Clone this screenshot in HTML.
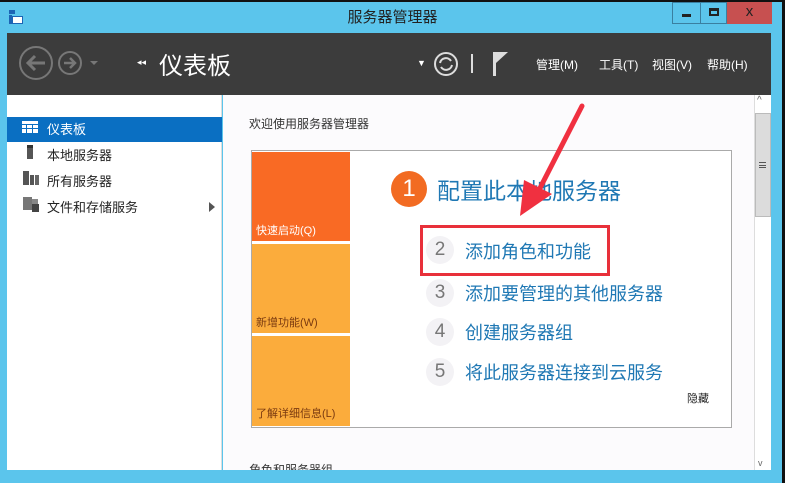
<!DOCTYPE html>
<html><head><meta charset="utf-8"><style>
*{margin:0;padding:0;box-sizing:border-box}
body{width:785px;height:483px;overflow:hidden;background:#5bc5ec;font-family:"Liberation Sans","Noto Sans CJK SC",sans-serif;position:relative}
.a{position:absolute}
.t{white-space:nowrap}
</style></head><body>
<div class="a" style="left:0;top:0;width:785px;height:2px;background:#111"></div>
<div class="a" style="right:0;top:0;width:3px;height:483px;background:#111"></div>
<div class="a" style="left:9px;top:10px;width:6px;height:4px;background:#1c64b4"></div>
<div class="a" style="left:9px;top:15px;width:3px;height:9px;background:#1c64b4"></div>
<div class="a" style="left:12px;top:16px;width:11px;height:8px;border:1px solid #1c64b4;background:#fff"></div>
<div class="a t" style="left:0;width:785px;top:6px;text-align:center;font-size:15px;color:#222">服务器管理器</div>
<div class="a" style="left:672px;top:2px;width:29px;height:22px;border:1px solid #3a7fa0;background:#5bc5ec"></div>
<div class="a" style="left:682px;top:14px;width:9px;height:3px;background:#222"></div>
<div class="a" style="left:700px;top:2px;width:27px;height:22px;border:1px solid #3a7fa0;background:#5bc5ec"></div>
<div class="a" style="left:709px;top:8px;width:10px;height:8px;border:2px solid #222;border-top-width:3px"></div>
<div class="a" style="left:727px;top:2px;width:45px;height:22px;background:#c75050;color:#222;font-size:15px;text-align:center;line-height:20px">x</div>
<div class="a" style="left:7px;top:33px;width:764px;height:62px;background:#3c3c3c"></div>
<svg class="a" style="left:18px;top:44px" width="85" height="40">
<circle cx="18" cy="19" r="16" fill="none" stroke="#777" stroke-width="2"/>
<path d="M27 19H10M17 12l-7 7 7 7" fill="none" stroke="#777" stroke-width="3"/>
<circle cx="52" cy="19" r="11" fill="none" stroke="#777" stroke-width="2"/>
<path d="M46 19h11M52 14l5 5-5 5" fill="none" stroke="#777" stroke-width="2.5"/>
<path d="M72 17h8l-4 4z" fill="#777"/>
</svg>
<div class="a t" style="left:137px;top:57px;color:#fff;font-size:9px">◂◂</div>
<div class="a t" style="left:159px;top:46px;color:#fff;font-size:24px">仪表板</div>
<div class="a t" style="left:417px;top:58px;color:#fff;font-size:9px">▼</div>
<svg class="a" style="left:432px;top:51px" width="80" height="28">
<circle cx="14" cy="13" r="11" fill="none" stroke="#ddd" stroke-width="2"/>
<path d="M8 12a6 6 0 0 1 11-2M20 14a6 6 0 0 1-11 2" fill="none" stroke="#ddd" stroke-width="2"/>
<rect x="39" y="3" width="2" height="19" fill="#ddd"/>
<rect x="61" y="1" width="3" height="24" fill="#ddd"/>
<path d="M64 1h12l-12 11z" fill="#ddd"/>
</svg>
<div class="a t" style="left:536px;top:56px;color:#fff;font-size:12px">管理(M)</div>
<div class="a t" style="left:599px;top:56px;color:#fff;font-size:12px">工具(T)</div>
<div class="a t" style="left:652px;top:56px;color:#fff;font-size:12px">视图(V)</div>
<div class="a t" style="left:707px;top:56px;color:#fff;font-size:12px">帮助(H)</div>
<div class="a" style="left:7px;top:95px;width:215px;height:375px;background:#fff;border-right:1px solid #ddd"></div>
<div class="a" style="left:7px;top:117px;width:215px;height:25px;background:#0a6fc2"></div>
<svg class="a" style="left:22px;top:119px" width="18" height="100">
<g fill="#fff"><rect x="0" y="2" width="16" height="3"/><rect x="0" y="6" width="4" height="3"/><rect x="5" y="6" width="5" height="3"/><rect x="11" y="6" width="5" height="3"/><rect x="0" y="10" width="4" height="4"/><rect x="5" y="10" width="5" height="4"/><rect x="11" y="10" width="5" height="4"/></g>
<rect x="5" y="26" width="6" height="14" fill="#555"/><rect x="5" y="26" width="6" height="3" fill="#333"/>
<rect x="1" y="52" width="6" height="14" fill="#555"/><rect x="8" y="56" width="4" height="10" fill="#555"/><rect x="13" y="56" width="4" height="10" fill="#666"/>
<rect x="1" y="78" width="9" height="13" fill="#777"/><rect x="10" y="80" width="6" height="5" fill="#888"/><rect x="10" y="85" width="7" height="8" fill="#444"/>
</svg>
<div class="a t" style="left:47px;top:119px;color:#fff;font-size:13px">仪表板</div>
<div class="a t" style="left:47px;top:145px;color:#222;font-size:13px">本地服务器</div>
<div class="a t" style="left:47px;top:171px;color:#222;font-size:13px">所有服务器</div>
<div class="a t" style="left:47px;top:197px;color:#222;font-size:13px">文件和存储服务</div>
<div class="a" style="left:209px;top:202px;width:0;height:0;border-left:6px solid #555;border-top:5px solid transparent;border-bottom:5px solid transparent"></div>
<div class="a" style="left:223px;top:95px;width:548px;height:375px;background:#fcfbfd"></div>
<div class="a" style="left:754px;top:95px;width:17px;height:375px;background:#fff;border-left:1px solid #ddd"></div>
<div class="a" style="left:755px;top:113px;width:16px;height:104px;background:#dcdcdc;border:1px solid #bbb"></div>
<div class="a t" style="left:757px;top:95px;font-size:10px;color:#666">^</div>
<div class="a" style="left:759px;top:162px;width:7px;height:6px;border-top:1px solid #555;border-bottom:1px solid #555"></div>
<div class="a" style="left:759px;top:165px;width:7px;height:1px;background:#555"></div>
<div class="a t" style="left:758px;top:458px;font-size:9px;color:#666">v</div>
<div class="a t" style="left:249px;top:115px;color:#333;font-size:12px">欢迎使用服务器管理器</div>
<div class="a" style="left:251px;top:150px;width:481px;height:278px;background:#fff;border:1px solid #aaa"></div>
<div class="a" style="left:252px;top:152px;width:98px;height:89px;background:#f96a24"></div>
<div class="a" style="left:252px;top:244px;width:98px;height:89px;background:#fbac3c"></div>
<div class="a" style="left:252px;top:336px;width:98px;height:90px;background:#fbac3c"></div>
<div class="a t" style="left:256px;top:222px;color:#fff;font-size:11px">快速启动(Q)</div>
<div class="a t" style="left:256px;top:314px;color:#7a3a10;font-size:11px">新增功能(W)</div>
<div class="a t" style="left:256px;top:405px;color:#7a3a10;font-size:11px">了解详细信息(L)</div>
<div class="a" style="left:391px;top:171px;width:36px;height:36px;border-radius:50%;background:#f26b22;color:#fff;font-size:24px;text-align:center;line-height:36px">1</div>
<div class="a t" style="left:437px;top:172px;color:#1f78b4;font-size:23px">配置此本地服务器</div>
<div class="a" style="left:426px;top:236px;width:28px;height:28px;border-radius:50%;background:#f3f2f5;color:#777;font-size:19px;text-align:center;line-height:28px">2</div>
<div class="a t" style="left:465px;top:238px;color:#1f78b4;font-size:18px">添加角色和功能</div>
<div class="a" style="left:426px;top:279px;width:28px;height:28px;border-radius:50%;background:#f3f2f5;color:#777;font-size:19px;text-align:center;line-height:28px">3</div>
<div class="a t" style="left:465px;top:280px;color:#1f78b4;font-size:18px">添加要管理的其他服务器</div>
<div class="a" style="left:426px;top:318px;width:28px;height:28px;border-radius:50%;background:#f3f2f5;color:#777;font-size:19px;text-align:center;line-height:28px">4</div>
<div class="a t" style="left:465px;top:319px;color:#1f78b4;font-size:18px">创建服务器组</div>
<div class="a" style="left:426px;top:358px;width:28px;height:28px;border-radius:50%;background:#f3f2f5;color:#777;font-size:19px;text-align:center;line-height:28px">5</div>
<div class="a t" style="left:465px;top:359px;color:#1f78b4;font-size:18px">将此服务器连接到云服务</div>
<div class="a t" style="left:687px;top:390px;color:#222;font-size:11px">隐藏</div>
<div class="a" style="left:420px;top:225px;width:190px;height:51px;border:3px solid #e8303a"></div>
<svg class="a" style="left:500px;top:100px" width="90" height="125">
<path d="M82 6 L38 92" stroke="#f03040" stroke-width="5" stroke-linecap="round"/>
<path d="M20 116 L24 80 L52 94 Z" fill="#f03040"/>
</svg>
<div class="a" style="left:223px;top:460px;width:531px;height:10px;overflow:hidden">
<div class="t" style="position:absolute;left:26px;top:1px;color:#333;font-size:12px">角色和服务器组</div></div>
</body></html>
